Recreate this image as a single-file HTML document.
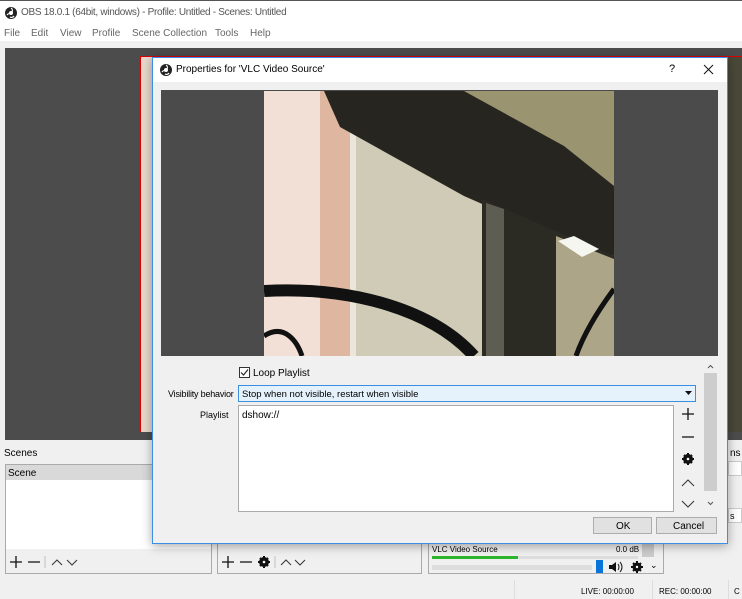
<!DOCTYPE html>
<html><head><meta charset="utf-8"><style>
*{margin:0;padding:0;box-sizing:border-box}
body{width:742px;height:599px;overflow:hidden;background:#f0f0f0;font-family:"Liberation Sans",sans-serif;font-size:10px;color:#000;position:relative}
.a{position:absolute}
.t{white-space:nowrap}
</style></head><body>
<div class="a" style="left:0;top:0;width:742px;height:24px;background:#fff"></div>
<div class="a" style="left:0;top:0;width:742px;height:1px;background:#555"></div>
<svg class="a" style="left:5px;top:7px" width="12" height="12" viewBox="0 0 12 12"><circle cx="6" cy="6" r="6" fill="#222"/><circle cx="6" cy="6" r="2" fill="#fff"/><path d="M6 1a3 3 0 0 1 1 4M2 8a3 3 0 0 1 4-1M9 9a3 3 0 0 1-4 1" stroke="#fff" stroke-width="1.2" fill="none"/></svg>
<div class="a t" style="left:21px;top:7px;color:#555;font-size:10px;letter-spacing:-0.3px">OBS 18.0.1 (64bit, windows) - Profile: Untitled - Scenes: Untitled</div>
<div class="a" style="left:0;top:24px;width:742px;height:17px;background:#fff"></div>
<div class="a t" style="left:4px;top:28px;color:#666;font-size:10px">File</div>
<div class="a t" style="left:31px;top:28px;color:#666;font-size:10px">Edit</div>
<div class="a t" style="left:60px;top:28px;color:#666;font-size:10px">View</div>
<div class="a t" style="left:92px;top:28px;color:#666;font-size:10px">Profile</div>
<div class="a t" style="left:132px;top:28px;color:#666;font-size:10px">Scene Collection</div>
<div class="a t" style="left:215px;top:28px;color:#666;font-size:10px">Tools</div>
<div class="a t" style="left:250px;top:28px;color:#666;font-size:10px">Help</div>
<div class="a" style="left:5px;top:48px;width:737px;height:392px;background:#4c4c4c"></div>
<div class="a" style="left:140px;top:56px;width:602px;height:376px;background:#6a6758;border:1px solid #d00"></div>
<div class="a" style="left:141px;top:57px;width:12px;height:375px;background:#e8d8cc"></div>
<div class="a" style="left:727px;top:57px;width:15px;height:375px;background:#4a4838"></div>
<div class="a t" style="left:4px;top:448px">Scenes</div>
<div class="a t" style="left:730px;top:448px">ns</div>
<div class="a" style="left:5px;top:464px;width:207px;height:110px;border:1px solid #aaa;background:#f0f0f0"></div>
<div class="a" style="left:6px;top:465px;width:205px;height:84px;background:#fff"></div>
<div class="a" style="left:6px;top:465px;width:205px;height:15px;background:#d9d9d9"></div>
<div class="a t" style="left:8px;top:468px">Scene</div>
<svg class="a" style="left:8px;top:555px" width="80" height="14" viewBox="0 0 80 14" fill="none" stroke="#111" stroke-width="1.3"><path d="M2 7h12M8 1v12M20 7h12"/><path d="M37 1v12" stroke="#ccc"/><path d="M44 10l5-5 5 5M59 5l5 5 5-5" stroke="#333" stroke-width="1"/></svg>
<div class="a" style="left:217px;top:543px;width:205px;height:31px;border:1px solid #aaa;border-top:none"></div>
<svg class="a" style="left:220px;top:555px" width="100" height="14" viewBox="0 0 100 14" fill="none" stroke="#111" stroke-width="1.3"><path d="M2 7h12M8 1v12M20 7h12"/><circle cx="44" cy="7" r="3.5" stroke-width="3"/><path d="M44 1v12M38 7h12M40 3l8 8M48 3l-8 8" stroke-width="2"/><circle cx="44" cy="7" r="1.3" fill="#fff" stroke="none"/><path d="M55 1v12" stroke="#ccc"/><path d="M61 10l5-5 5 5M75 5l5 5 5-5" stroke="#333" stroke-width="1"/></svg>
<div class="a" style="left:428px;top:543px;width:236px;height:31px;border:1px solid #aaa;border-top:none"></div>
<div class="a t" style="left:432px;top:545px;font-size:8px">VLC Video Source</div>
<div class="a t" style="left:616px;top:545px;font-size:8px">0.0 dB</div>
<div class="a" style="left:432px;top:556px;width:206px;height:3px;background:#ddd"></div>
<div class="a" style="left:432px;top:556px;width:86px;height:3px;background:#2db52d"></div>
<div class="a" style="left:432px;top:565px;width:160px;height:5px;background:#ddd"></div>
<div class="a" style="left:596px;top:560px;width:7px;height:13px;background:#0a74da"></div>
<svg class="a" style="left:608px;top:561px" width="40" height="12" viewBox="0 0 40 12"><path d="M1 4h3l4-3v10l-4-3H1z" fill="#111"/><path d="M10 3q2 3 0 6M12 1q4 5 0 10" stroke="#111" fill="none"/><circle cx="29" cy="6" r="3.3" fill="none" stroke="#111" stroke-width="2.5"/><path d="M29 0v12M23 6h12M25 2l8 8M33 2l-8 8" stroke="#111" stroke-width="2"/><circle cx="29" cy="6" r="1.2" fill="#fff"/></svg>
<div class="a" style="left:642px;top:543px;width:12px;height:14px;background:#ccc"></div>
<div class="a t" style="left:650px;top:560px;font-size:9px">⌄</div>
<div class="a" style="left:728px;top:461px;width:14px;height:15px;background:#fff;border:1px solid #ccc"></div>
<div class="a" style="left:728px;top:508px;width:14px;height:15px;background:#fff;border:1px solid #ccc"></div>
<div class="a t" style="left:730px;top:511px;font-size:9px">s</div>
<div class="a" style="left:514px;top:580px;width:1px;height:19px;background:#ddd"></div>
<div class="a t" style="left:581px;top:587px;font-size:8px">LIVE: 00:00:00</div>
<div class="a" style="left:652px;top:580px;width:1px;height:19px;background:#ddd"></div>
<div class="a t" style="left:659px;top:587px;font-size:8px">REC: 00:00:00</div>
<div class="a" style="left:728px;top:580px;width:1px;height:19px;background:#ddd"></div>
<div class="a t" style="left:734px;top:587px;font-size:8px">C</div>
<div class="a" style="left:152px;top:57px;width:576px;height:487px;background:#f0f0f0;border:1px solid #3a8ee6;box-shadow:0 2px 10px rgba(0,0,0,.35)"></div>
<div class="a" style="left:153px;top:58px;width:574px;height:24px;background:#fff"></div>
<svg class="a" style="left:160px;top:64px" width="12" height="12" viewBox="0 0 12 12"><circle cx="6" cy="6" r="6" fill="#222"/><circle cx="6" cy="6" r="2" fill="#fff"/><path d="M6 1a3 3 0 0 1 1 4M2 8a3 3 0 0 1 4-1M9 9a3 3 0 0 1-4 1" stroke="#fff" stroke-width="1.2" fill="none"/></svg>
<div class="a t" style="left:176px;top:64px;font-size:10px">Properties for 'VLC Video Source'</div>
<div class="a t" style="left:669px;top:63px;font-size:11px">?</div>
<svg class="a" style="left:703px;top:64px" width="11" height="11" viewBox="0 0 11 11"><path d="M1 1l9 9M10 1l-9 9" stroke="#111" stroke-width="1"/></svg>
<div class="a" style="left:161px;top:90px;width:557px;height:266px;background:#4b4b4b"></div>
<svg class="a" style="left:264px;top:91px" width="350" height="265" viewBox="0 0 350 265">
<rect width="350" height="265" fill="#d5d2c0"/>
<rect x="0" width="58" height="265" fill="#f2e0d6"/>
<rect x="56" width="32" height="265" fill="#dfb6a0"/>
<rect x="86" width="6" height="265" fill="#ece6da"/>
<polygon points="92,40 218,110 218,265 92,265" fill="#cfcbb6"/>
<polygon points="180,0 350,0 350,100 250,40" fill="#9a9470"/>
<polygon points="60,0 200,0 300,55 350,95 350,165 280,140 200,105 76,36" fill="#262520"/>
<polygon points="218,108 350,165 350,265 218,265" fill="#2b2a23"/>
<polygon points="222,112 240,118 240,265 222,265" fill="#5e5d52"/>
<polygon points="292,145 350,168 350,265 292,265" fill="#ada588"/>
<polygon points="294,150 310,145 335,158 318,166" fill="#f6f6f0"/>
<path d="M0 200 C90 195 170 220 210 265" stroke="#111" stroke-width="12" fill="none"/>
<path d="M0 245 C20 232 33 250 38 265" stroke="#111" stroke-width="5" fill="none"/>
<path d="M350 198 C330 225 318 248 312 265" stroke="#111" stroke-width="5" fill="none"/>
</svg>
<div class="a" style="left:239px;top:367px;width:11px;height:11px;border:1px solid #333;background:#fff"></div>
<svg class="a" style="left:240px;top:368px" width="9" height="9" viewBox="0 0 9 9"><path d="M1 4.5l2.5 2.5L8 1.5" stroke="#222" fill="none" stroke-width="1.1"/></svg>
<div class="a t" style="left:253px;top:368px;font-size:10px">Loop Playlist</div>
<div class="a t" style="left:168px;top:389px;font-size:9px;letter-spacing:-0.2px">Visibility behavior</div>
<div class="a" style="left:238px;top:385px;width:458px;height:17px;background:#e5f1fb;border:1px solid #3c8fde"></div>
<div class="a t" style="left:242px;top:389px;font-size:9.5px">Stop when not visible, restart when visible</div>
<svg class="a" style="left:685px;top:391px" width="7" height="5" viewBox="0 0 7 5"><path d="M0 0h7L3.5 4z" fill="#111"/></svg>
<div class="a t" style="left:200px;top:410px;font-size:9px">Playlist</div>
<div class="a" style="left:238px;top:405px;width:436px;height:107px;background:#fff;border:1px solid #aaa"></div>
<div class="a t" style="left:242px;top:410px;font-size:10px">dshow://</div>
<svg class="a" style="left:680px;top:406px" width="16" height="104" viewBox="0 0 16 104" fill="none" stroke="#111" stroke-width="1.3"><path d="M2 8h12M8 2v12M2 31h12"/><circle cx="8" cy="53" r="3.5" stroke-width="3"/><path d="M8 47v12M2 53h12M4 49l8 8M12 49l-8 8" stroke-width="2"/><circle cx="8" cy="53" r="1.3" fill="#fff" stroke="none"/><path d="M2 80l6-6 6 6M2 95l6 6 6-6" stroke="#333" stroke-width="1"/></svg>
<div class="a" style="left:704px;top:373px;width:13px;height:118px;background:#cdcdcd"></div>
<svg class="a" style="left:706px;top:363px" width="9" height="144" viewBox="0 0 9 144"><path d="M2 5l2.5-2.5L7 5M2 139l2.5 2.5L7 139" stroke="#555" fill="none"/></svg>
<div class="a" style="left:593px;top:517px;width:59px;height:17px;background:#e1e1e1;border:1px solid #adadad"></div>
<div class="a t" style="left:616px;top:521px;font-size:10px">OK</div>
<div class="a" style="left:656px;top:517px;width:61px;height:17px;background:#e1e1e1;border:1px solid #adadad"></div>
<div class="a t" style="left:673px;top:521px;font-size:10px">Cancel</div>
</body></html>
